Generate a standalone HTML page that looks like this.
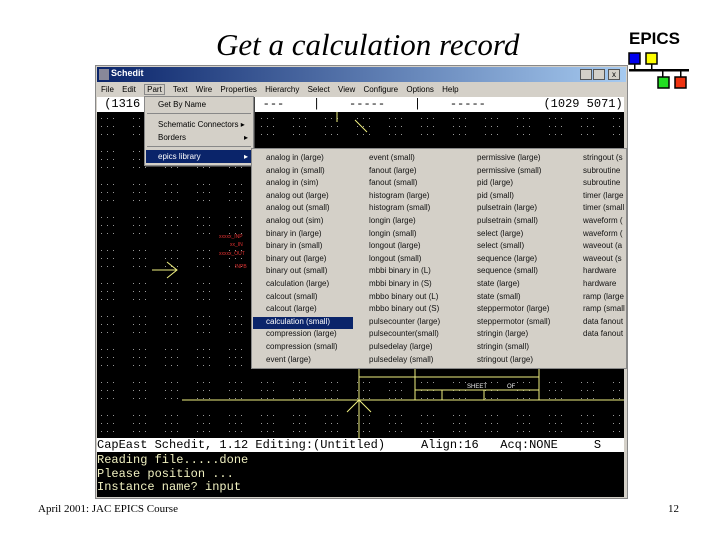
<!DOCTYPE html>
<html><head><style>
*{margin:0;padding:0;box-sizing:border-box}
body{width:720px;height:540px;background:#fff;position:relative;overflow:hidden;font-family:"Liberation Sans",sans-serif}
.a{position:absolute}
.t{font-family:"Liberation Serif",serif;font-style:italic;font-size:31px;left:216px;top:27px}
.menu{font-size:8px;color:#000;white-space:nowrap}
.mono{font-family:"Liberation Mono",monospace}
.sub div{position:absolute;font-size:8px;white-space:nowrap;color:#111}
</style></head><body>
<div class="a t">Get a calculation record</div>
<div class="a" style="left:629px;top:29px;font-weight:bold;font-size:17px">EPICS</div>
<svg class="a" style="left:628px;top:52px" width="64" height="40">
<rect x="1" y="1" width="11" height="11" fill="#0000ee" stroke="#000" stroke-width="1.5"/>
<rect x="18" y="1" width="11" height="11" fill="#ffff00" stroke="#000" stroke-width="1.5"/>
<rect x="1" y="17" width="60" height="2.5" fill="#000"/>
<rect x="6" y="12" width="1.5" height="6" fill="#000"/><rect x="23" y="12" width="1.5" height="6" fill="#000"/>
<rect x="34" y="19" width="1.5" height="6" fill="#000"/><rect x="52" y="19" width="1.5" height="6" fill="#000"/>
<rect x="30" y="25" width="11" height="11" fill="#22dd22" stroke="#000" stroke-width="1.5"/>
<rect x="47" y="25" width="11" height="11" fill="#ee3311" stroke="#000" stroke-width="1.5"/>
</svg>

<div class="a" style="left:95px;top:65px;width:533px;height:434px;background:#d4d0c8;border:1px solid #888"></div>
<div class="a" style="left:97px;top:67px;width:529px;height:15px;background:linear-gradient(90deg,#0a246a,#a6caf0)"></div>
<div class="a" style="left:99px;top:69px;width:10px;height:11px;background:#889"></div>
<div class="a" style="left:111px;top:68px;color:#fff;font-weight:bold;font-size:9px">Schedit</div>
<div class="a" style="left:580px;top:69px;width:12px;height:11px;background:#d4d0c8;border:1px solid #555"></div>
<div class="a" style="left:593px;top:69px;width:12px;height:11px;background:#d4d0c8;border:1px solid #555"></div>
<div class="a" style="left:608px;top:69px;width:12px;height:11px;background:#d4d0c8;border:1px solid #555;font-size:8px;line-height:9px;text-align:center">x</div>
<div class="a menu" style="left:101px;top:85px;word-spacing:6px">File Edit <span style="border:1px solid #888;padding:0 2px">Part</span> Text Wire Properties Hierarchy Select View Configure Options Help</div>
<div class="a mono" style="left:97px;top:97px;width:527px;height:15px;background:#fff;font-size:12px;line-height:15px;white-space:pre"> (1316                 ---    |    -----    |    -----        (1029 5071)</div>

<svg class="a" style="left:97px;top:112px" width="527" height="326">
<defs><pattern id="g" width="32" height="33" patternUnits="userSpaceOnUse">
<g fill="#999"><rect x="4" y="6" width="1" height="1"/><rect x="10" y="6" width="1" height="1"/><rect x="16" y="6" width="1" height="1"/>
<rect x="4" y="14" width="1" height="1"/><rect x="10" y="14" width="1" height="1"/><rect x="16" y="14" width="1" height="1"/>
<rect x="4" y="22" width="1" height="1"/><rect x="10" y="22" width="1" height="1"/><rect x="16" y="22" width="1" height="1"/></g></pattern></defs>
<rect width="527" height="326" fill="#000"/><rect width="527" height="326" fill="url(#g)"/>
<g stroke="#f0f080" fill="none" stroke-width="1">
<line x1="85" y1="288" x2="527" y2="288"/>
<line x1="262" y1="230" x2="262" y2="326"/>
<path d="M262 288 L250 300 M262 288 L274 300"/>
<path d="M240 0 V10 M258 8 L270 20"/>
<rect x="262" y="255" width="180" height="33"/>
<line x1="262" y1="265" x2="442" y2="265"/><line x1="318" y1="255" x2="318" y2="288"/>
<line x1="318" y1="278" x2="442" y2="278"/><line x1="345" y1="278" x2="345" y2="288"/><line x1="387" y1="278" x2="387" y2="288"/>
<line x1="55" y1="158" x2="80" y2="158"/><path d="M70 150 L80 158 L70 166"/>
</g>
<text x="370" y="276" fill="#eee" font-size="6">SHEET</text><text x="410" y="276" fill="#eee" font-size="6">OF</text>
<g fill="#e03030" font-size="5"><text x="122" y="126">xxxxx_INP</text><text x="133" y="134">xx_IN</text><text x="122" y="143">xxxxx_OUT</text><text x="138" y="156">INPB</text></g>
</svg>
<div class="a mono" style="left:97px;top:438px;width:527px;height:14px;background:#fff;font-size:12px;line-height:14px;white-space:pre;overflow:hidden">CapEast Schedit, 1.12 Editing:(Untitled)     Align:16   Acq:NONE     S</div>
<div class="a mono" style="left:97px;top:452px;width:527px;height:45px;background:#000;color:#f0f0c0;font-size:12px;line-height:13.5px;white-space:pre;padding-top:2px">Reading file.....done
Please position ...
Instance name? input</div>

<div class="a" style="left:144px;top:96px;width:110px;height:70px;background:#d4d0c8;border:1px solid #888;box-shadow:1px 1px 0 #444"></div>
<div class="a menu" style="left:158px;top:100px">Get By Name</div>
<div class="a" style="left:147px;top:113px;width:104px;height:1px;background:#888"></div>
<div class="a menu" style="left:158px;top:120px">Schematic Connectors ▸</div>
<div class="a menu" style="left:158px;top:133px">Borders</div><div class="a menu" style="left:244px;top:133px">▸</div>
<div class="a" style="left:147px;top:146px;width:104px;height:1px;background:#888"></div>
<div class="a menu" style="left:146px;top:150px;width:106px;height:13px;background:#0a246a;color:#fff;padding:2px 0 0 12px">epics library<span style="position:absolute;left:98px">▸</span></div>

<div class="a sub" style="left:251px;top:148px;width:376px;height:221px;background:#d4d0c8;border:1px solid #888">
<div style="left:1px;top:168px;width:100px;height:12px;background:#0a246a"></div>
<div style="left:14px;top:3px;line-height:12.6px">analog in (large)<br>analog in (small)<br>analog in (sim)<br>analog out (large)<br>analog out (small)<br>analog out (sim)<br>binary in (large)<br>binary in (small)<br>binary out (large)<br>binary out (small)<br>calculation (large)<br>calcout (small)<br>calcout (large)<br><span style="color:#fff">calculation (small)</span><br>compression (large)<br>compression (small)<br>event (large)</div>
<div style="left:117px;top:3px;line-height:12.6px">event (small)<br>fanout (large)<br>fanout (small)<br>histogram (large)<br>histogram (small)<br>longin (large)<br>longin (small)<br>longout (large)<br>longout (small)<br>mbbi binary in (L)<br>mbbi binary in (S)<br>mbbo binary out (L)<br>mbbo binary out (S)<br>pulsecounter (large)<br>pulsecounter(small)<br>pulsedelay (large)<br>pulsedelay (small)</div>
<div style="left:225px;top:3px;line-height:12.6px">permissive (large)<br>permissive (small)<br>pid (large)<br>pid (small)<br>pulsetrain (large)<br>pulsetrain (small)<br>select (large)<br>select (small)<br>sequence (large)<br>sequence (small)<br>state (large)<br>state (small)<br>steppermotor (large)<br>steppermotor (small)<br>stringin (large)<br>stringin (small)<br>stringout (large)</div>
<div style="left:331px;top:3px;line-height:12.6px">stringout (s<br>subroutine<br>subroutine<br>timer (large<br>timer (small<br>waveform (<br>waveform (<br>waveout (a<br>waveout (s<br>hardware<br>hardware<br>ramp (large<br>ramp (small<br>data fanout<br>data fanout</div>
</div>

<div class="a" style="left:38px;top:503px;font-family:'Liberation Serif',serif;font-size:11px">April 2001: JAC EPICS Course</div>
<div class="a" style="left:668px;top:503px;font-family:'Liberation Serif',serif;font-size:11px">12</div>
</body></html>
